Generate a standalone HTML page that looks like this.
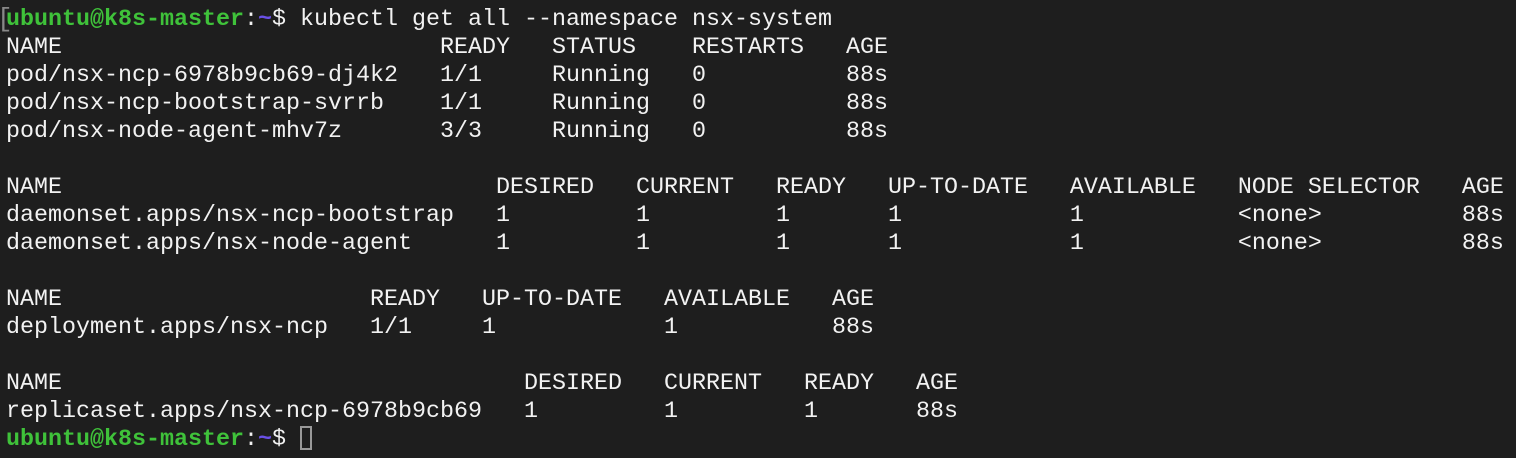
<!DOCTYPE html>
<html><head><meta charset="utf-8"><style>
html,body{margin:0;padding:0;background:#1e1e1e;width:1516px;height:458px;overflow:hidden}
pre{position:absolute;left:6px;top:6px;margin:0;font-family:"Liberation Mono",monospace;font-size:23.33px;line-height:28px;color:#f2f2f2}
.g{color:#3fc23a;font-weight:bold}.p{color:#6a50e6;font-weight:bold}
.br{position:absolute;left:-3px;top:5px;font-family:"Liberation Mono",monospace;font-size:26px;line-height:28px;color:#888}
.cur{display:inline-block;width:12px;height:24px;border:2px solid #999;box-sizing:border-box;vertical-align:-5px}
</style></head><body>
<div class="br">[</div>
<pre><span class="g">ubuntu@k8s-master</span>:<span class="p">~</span>$ kubectl get all --namespace nsx-system
NAME                           READY   STATUS    RESTARTS   AGE
pod/nsx-ncp-6978b9cb69-dj4k2   1/1     Running   0          88s
pod/nsx-ncp-bootstrap-svrrb    1/1     Running   0          88s
pod/nsx-node-agent-mhv7z       3/3     Running   0          88s

NAME                               DESIRED   CURRENT   READY   UP-TO-DATE   AVAILABLE   NODE SELECTOR   AGE
daemonset.apps/nsx-ncp-bootstrap   1         1         1       1            1           &lt;none&gt;          88s
daemonset.apps/nsx-node-agent      1         1         1       1            1           &lt;none&gt;          88s

NAME                      READY   UP-TO-DATE   AVAILABLE   AGE
deployment.apps/nsx-ncp   1/1     1            1           88s

NAME                                 DESIRED   CURRENT   READY   AGE
replicaset.apps/nsx-ncp-6978b9cb69   1         1         1       88s
<span class="g">ubuntu@k8s-master</span>:<span class="p">~</span>$ <span class="cur"></span></pre>
</body></html>
